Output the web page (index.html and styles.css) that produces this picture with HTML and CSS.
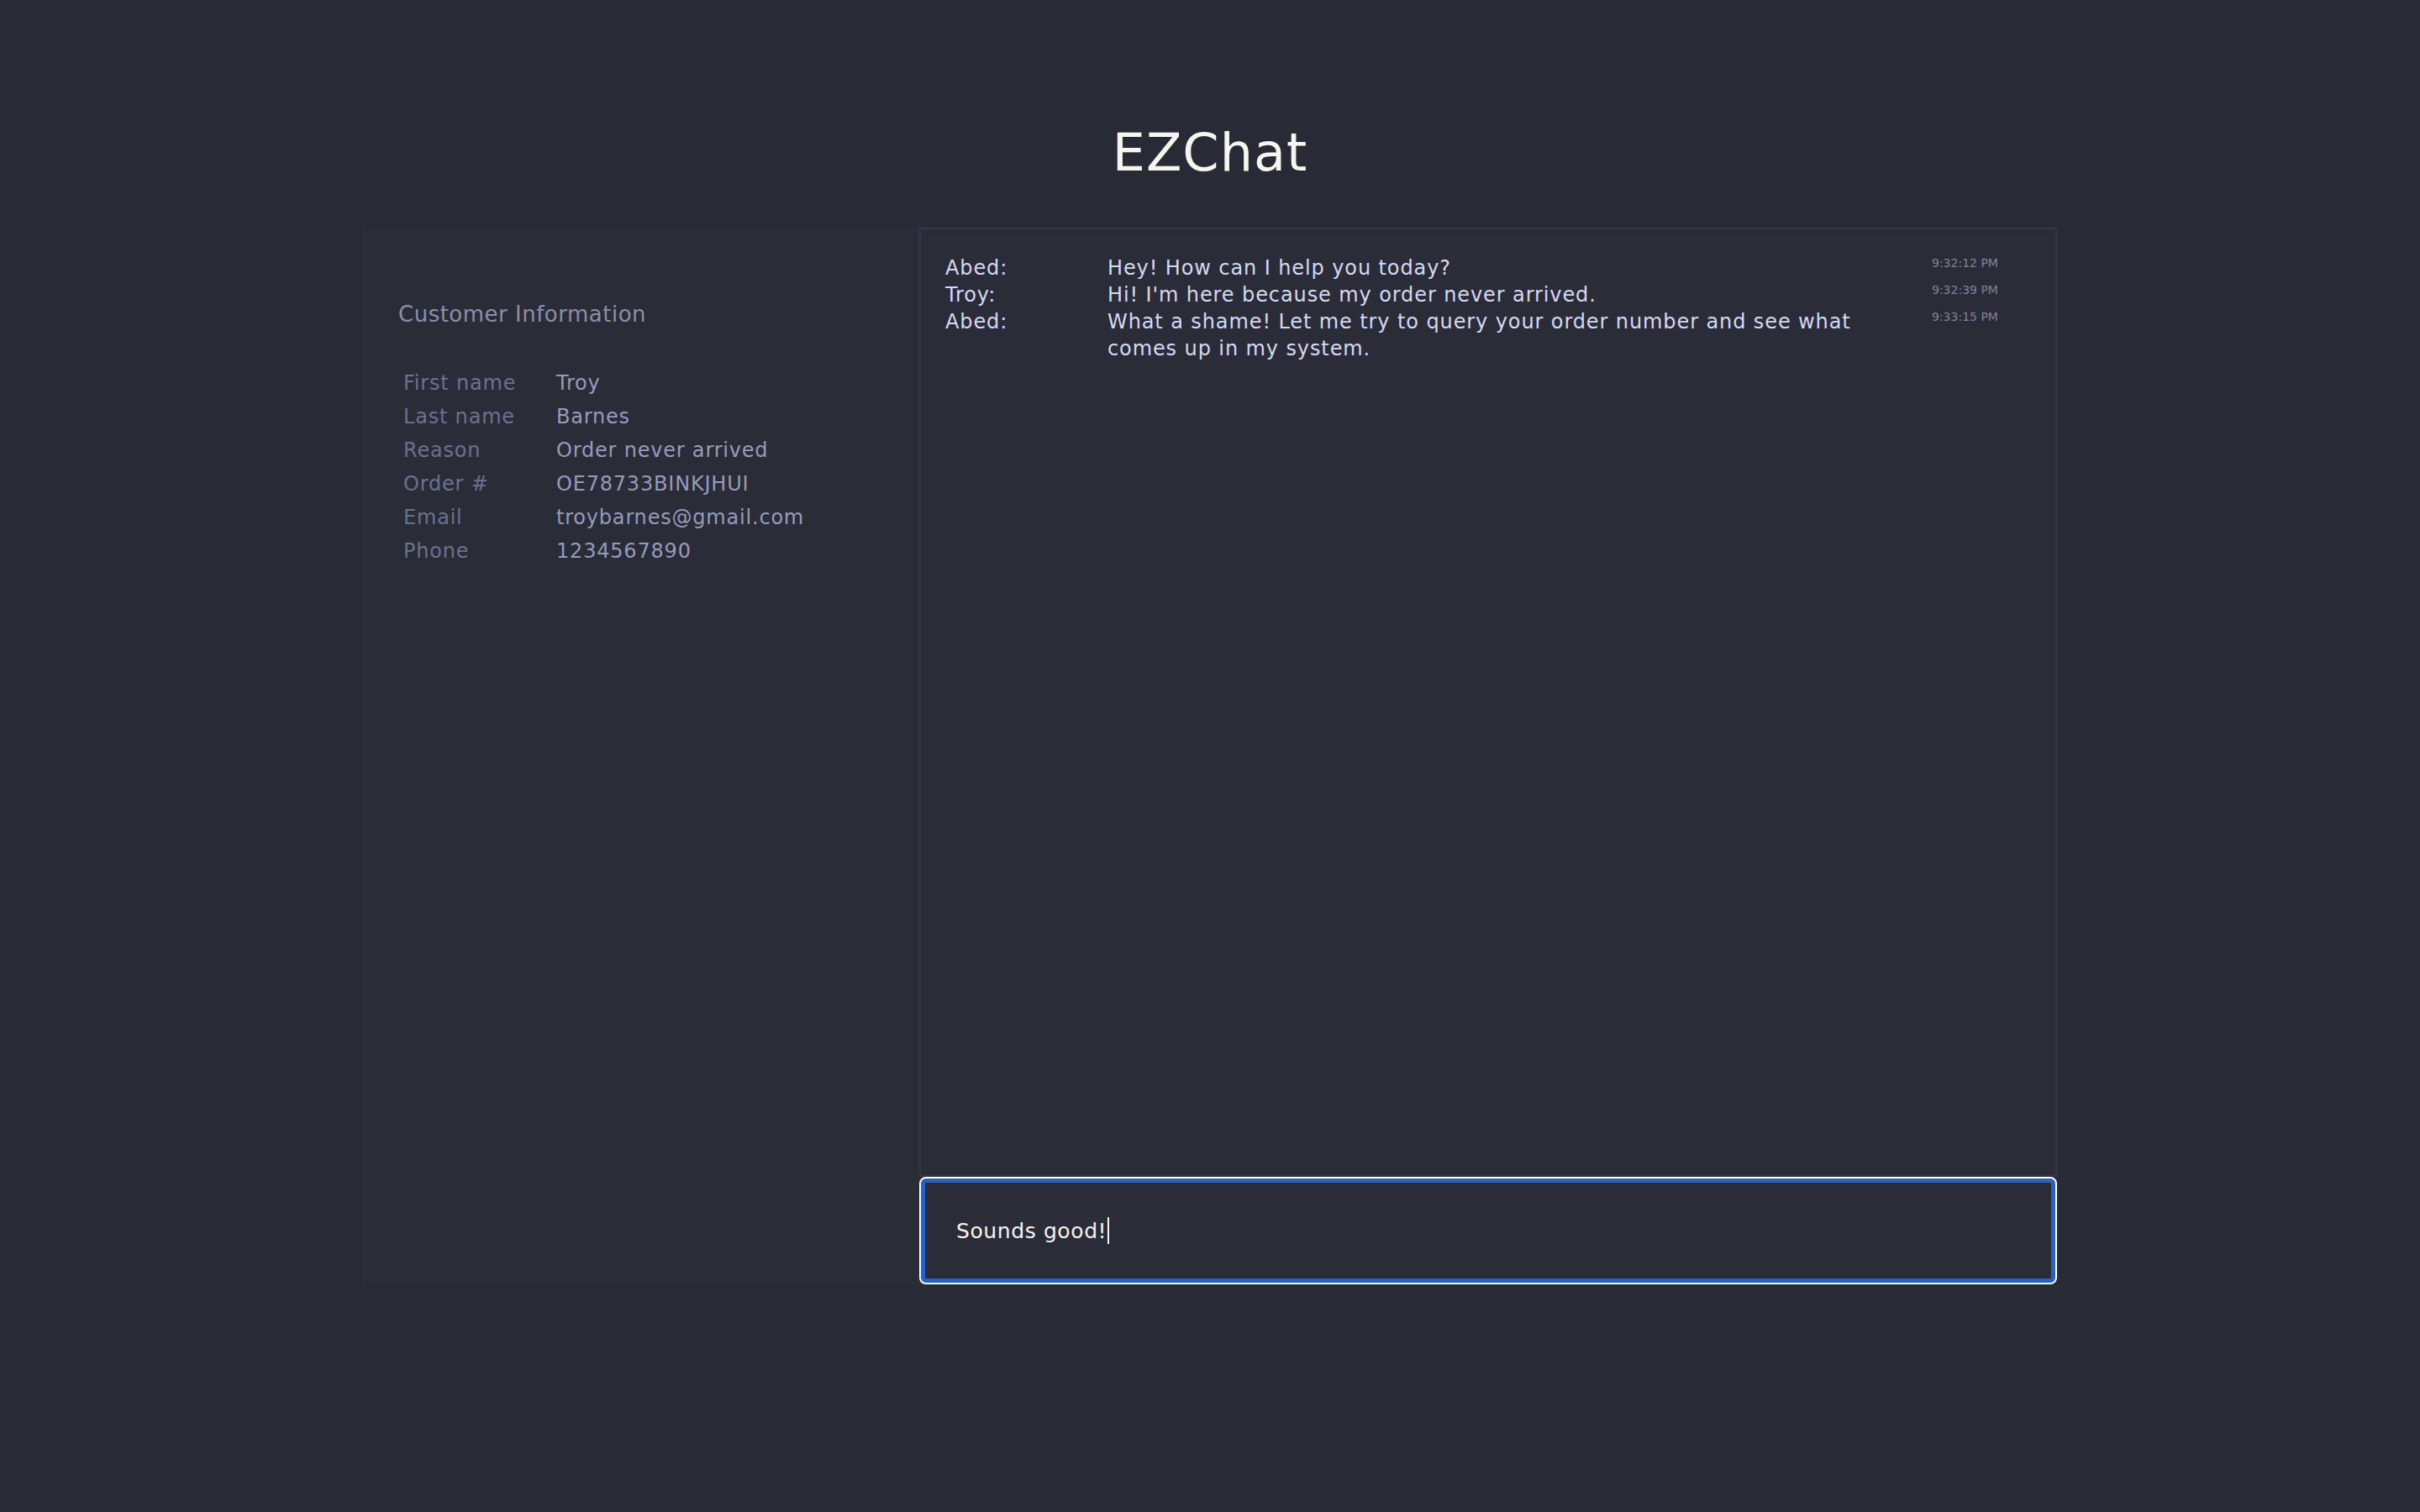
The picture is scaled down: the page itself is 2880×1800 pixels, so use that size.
FILE: index.html
```html
<!DOCTYPE html>
<html lang="en">
<head>
<meta charset="utf-8">
<title>EZChat</title>
<link rel="stylesheet" href="styles.css">
</head>
<body>
<header class="header">
  <h1 class="title">EZChat</h1>
</header>
<main class="main">
  <aside class="sidebar">
    <h2 class="sidebar-title">Customer Information</h2>
    <table class="info">
      <tr><td class="label">First name</td><td class="value">Troy</td></tr>
      <tr><td class="label">Last name</td><td class="value">Barnes</td></tr>
      <tr><td class="label">Reason</td><td class="value">Order never arrived</td></tr>
      <tr><td class="label">Order #</td><td class="value">OE78733BINKJHUI</td></tr>
      <tr><td class="label">Email</td><td class="value">troybarnes@gmail.com</td></tr>
      <tr><td class="label">Phone</td><td class="value">1234567890</td></tr>
    </table>
  </aside>
  <section class="chat">
    <div class="messages">
      <div class="msg">
        <span class="sender">Abed:</span>
        <span class="text">Hey! How can I help you today?</span>
        <span class="time">9:32:12 PM</span>
      </div>
      <div class="msg">
        <span class="sender">Troy:</span>
        <span class="text">Hi! I'm here because my order never arrived.</span>
        <span class="time">9:32:39 PM</span>
      </div>
      <div class="msg">
        <span class="sender">Abed:</span>
        <span class="text">What a shame! Let me try to query your order number and see what comes up in my system.</span>
        <span class="time">9:33:15 PM</span>
      </div>
    </div>
    <div class="composer">
      <span class="composer-text">Sounds good!</span><span class="caret"></span>
    </div>
  </section>
</main>
</body>
</html>
```
FILE: styles.css
```css
html, body {
  margin: 0;
  padding: 0;
}
body {
  background: #282a36;
  font-family: "DejaVu Sans", "Open Sans", sans-serif;
  width: 2880px;
  height: 1800px;
  overflow: hidden;
}
.header {
  height: 271px;
  display: flex;
  justify-content: center;
}
.title {
  margin: 0;
  padding-top: 146px;
  font-size: 62px;
  line-height: 72px;
  font-weight: 400;
  color: #f6f6ef;
  letter-spacing: 1px;
}
.main {
  width: 2016px;
  height: 1258px;
  margin: 0 auto;
  display: flex;
}
.sidebar {
  width: 662px;
  box-sizing: border-box;
  background: #2a2c38;
  border: 1px solid #2e303d;
  padding: 84px 0 0 41px;
}
.sidebar-title {
  margin: 0 0 44px 0;
  font-size: 26px;
  line-height: 36px;
  font-weight: 400;
  color: #8a8ea8;
  letter-spacing: 0.5px;
}
.info {
  border-collapse: collapse;
}
.info td {
  padding: 0;
  height: 40px;
  font-size: 24px;
  line-height: 40px;
  letter-spacing: 0.8px;
}
.label {
  width: 182px;
  padding-left: 6px !important;
  color: #6c7190;
}
.value {
  color: #969bbb;
}
.chat {
  flex: 1;
  display: flex;
  flex-direction: column;
}
.messages {
  flex: 1;
  border: 2px solid #353746;
  background: #2a2c38;
  padding: 30px 0 0 29px;
}
.msg {
  display: grid;
  grid-template-columns: 193px 930px 1fr;
  column-gap: 0;
  align-items: start;
}
.sender, .text {
  font-size: 24px;
  line-height: 32px;
  color: #d6d9f3;
  letter-spacing: 0.9px;
}
.time {
  margin-left: 51px;
  font-size: 14px;
  line-height: 20px;
  color: #7f839b;
}
.composer {
  height: 128px;
  box-sizing: border-box;
  border: 2px solid #ffffff;
  border-radius: 8px;
  box-shadow: inset 0 0 0 5px #2562c8;
  background: #2a2c38;
  display: flex;
  align-items: center;
  padding-left: 42px;
}
.composer-text {
  font-size: 25px;
  color: #f4f4f4;
  letter-spacing: 0.6px;
}
.caret {
  display: inline-block;
  width: 2px;
  height: 32px;
  background: #f4f4f4;
  margin-left: 1px;
}
```
